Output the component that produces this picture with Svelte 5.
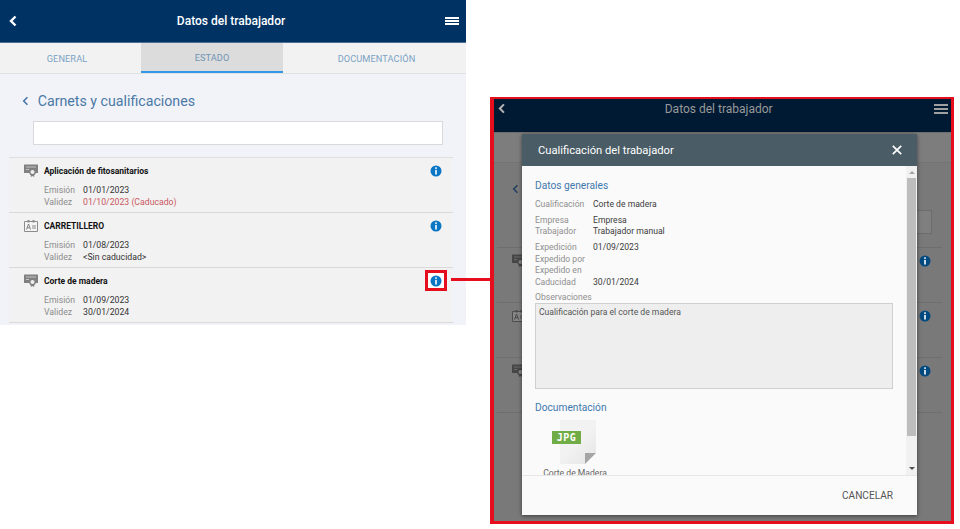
<script>
	const rows = [
		{ icon: "cert", name: "Aplicación de fitosanitarios", emision: "01/01/2023", validez: "01/10/2023 (Caducado)", expired: true },
		{ icon: "card", name: "CARRETILLERO", emision: "01/08/2023", validez: "<Sin caducidad>", expired: false },
		{ icon: "cert", name: "Corte de madera", emision: "01/09/2023", validez: "30/01/2024", expired: false, marked: true }
	];
</script>

{#snippet rowIcon(kind)}
	{#if kind === "cert"}
		<svg class="row-icon" viewBox="0 0 14 13" width="14" height="13">
			<rect x="0" y="0.500" width="14" height="8.500" rx=".5" fill="#808080" />
			<path d="M2 3h10" stroke="#c4c4c4" />
			<path d="M2 5.500h3" stroke="#c4c4c4" />
			<path d="M6.800 10v3l1.700-.9 1.700.9v-3z" fill="#808080" />
			<circle cx="8.500" cy="8" r="2.700" fill="#efefef" stroke="#808080" stroke-width="1.300" />
		</svg>
	{:else}
		<svg class="row-icon" viewBox="0 0 14 13" width="14" height="13">
			<path d="M.5 2.500h13v10H.5z" fill="#f4f4f4" stroke="#8c8c8c" />
			<path d="M3.500 1h2v2.500h-2zM8.500 1h2v2.500h-2z" fill="#8c8c8c" />
			<path d="M2.500 10.500l2-5.500 2 5.500M3.300 8.800h2.400" fill="none" stroke="#777" stroke-width=".9" />
			<path d="M8 7h4M8 9h4" stroke="#8c8c8c" />
		</svg>
	{/if}
{/snippet}

{#snippet infoIcon()}
	<svg class="info" viewBox="0 0 12 12" width="12" height="12">
		<circle cx="6" cy="6" r="5.500" fill="currentColor" />
		<rect x="5.200" y="2.300" width="1.600" height="1.600" fill="#fff" />
		<rect x="5.200" y="4.900" width="1.600" height="4.600" fill="#fff" />
	</svg>
{/snippet}

{#snippet burger()}
	<div class="burger"><span></span><span></span><span></span></div>
{/snippet}

{#snippet chevron(size, color, weight)}
	<svg viewBox="0 0 8 12" width={size * 0.67} height={size} class="chevron">
		<path d="M6.500 1.500L2 6l4.500 4.500" fill="none" stroke={color} stroke-width={weight} />
	</svg>
{/snippet}

<div class="page">
	<section class="app">
		<header class="bar">
			{@render chevron(12, "#fff", 2.400)}
			<h1>Datos del trabajador</h1>
			{@render burger()}
		</header>
		<nav class="tabs">
			<div class="tab t1">GENERAL</div>
			<div class="tab t2 active">ESTADO</div>
			<div class="tab t3">DOCUMENTACIÓN</div>
		</nav>
		<div class="heading">
			{@render chevron(10, "#3f72a3", 1.800)}
			<h2>Carnets y cualificaciones</h2>
		</div>
		<div class="search"></div>
		<div class="list">
			{#each rows as row}
				<article class="row">
					<div class="row-head">
						{@render rowIcon(row.icon)}
						<strong>{row.name}</strong>
						<span class="info-wrap" class:marked={row.marked}>
							{@render infoIcon()}
							{#if row.marked}<i class="connector"></i>{/if}
						</span>
					</div>
					<dl>
						<dt>Emisión</dt><dd>{row.emision}</dd>
						<dt>Validez</dt><dd class:expired={row.expired}>{row.validez}</dd>
					</dl>
				</article>
			{/each}
		</div>
	</section>

	<section class="frame">
		<div class="dimmed">
			<header class="dim-bar">
				{@render chevron(11, "#b5b5b5", 2.200)}
				<h1>Datos del trabajador</h1>
				{@render burger()}
			</header>
			<div class="dim-tabs"></div>
			<div class="dim-heading">{@render chevron(10, "#1f3f5f", 1.800)}</div>
			<div class="dim-search"></div>
			<div class="dim-list">
				{#each rows as row}
					<div class="dim-row">
						{@render rowIcon(row.icon)}
						{@render infoIcon()}
					</div>
				{/each}
			</div>
		</div>

		<div class="modal">
			<div class="modal-head">
				<h3>Cualificación del trabajador</h3>
				<svg viewBox="0 0 10 10" width="10" height="10">
					<path d="M.8.8l8.400 8.400M9.200.8L.8 9.200" stroke="#fff" stroke-width="1.700" />
				</svg>
			</div>
			<div class="modal-body">
				<div class="modal-content">
					<h4>Datos generales</h4>
					<div class="fields first">
						<span>Cualificación</span><b>Corte de madera</b>
					</div>
					<div class="fields">
						<span>Empresa</span><b>Empresa</b>
						<span>Trabajador</span><b>Trabajador manual</b>
					</div>
					<div class="fields">
						<span>Expedición</span><b>01/09/2023</b>
						<span>Expedido por</span><b></b>
						<span>Expedido en</span><b></b>
						<span>Caducidad</span><b>30/01/2024</b>
					</div>
					<div class="obs-label">Observaciones</div>
					<div class="obs">Cualificación para el corte de madera</div>
					<h4 class="doc-title">Documentación</h4>
					<div class="file">
						<div class="sheet">
							<span class="fold"></span>
							<span class="jpg">JPG</span>
						</div>
						<div class="file-name">Corte de Madera</div>
					</div>
				</div>
				<div class="scrollbar">
					<i class="arrow up"></i>
					<div class="thumb"></div>
					<i class="arrow down"></i>
				</div>
			</div>
			<footer class="modal-foot">CANCELAR</footer>
		</div>
	</section>
</div>

<style>
	:global(body) {
		margin: 0;
		background: #fff;
	}

	h1, h2, h3, h4, dl, dd {
		margin: 0;
		font-weight: 400;
	}

	.page {
		display: flex;
		align-items: flex-start;
		width: 960px;
		height: 529px;
		overflow: hidden;
		font-family: Roboto, "Liberation Sans", sans-serif;
	}

	.chevron {
		display: block;
		flex: none;
	}

	/* left: the app screen */
	.app {
		flex: none;
		width: 466px;
		height: 325px;
		background: #f2f3f8;
	}

	.bar {
		display: flex;
		align-items: center;
		justify-content: space-between;
		height: 43px;
		padding: 0 7px 0 9px;
		box-sizing: border-box;
		background: #003364;
		border-bottom: 1px solid #4d6f93;
		color: #fff;
	}

	.bar h1 {
		font-size: 12px;
		font-weight: 500;
	}

	.burger {
		display: flex;
		flex-direction: column;
		gap: 1px;
		width: 14px;
	}

	.burger span {
		height: 2px;
		background: currentColor;
	}

	.tabs {
		display: flex;
		height: 30px;
		padding-left: 1px;
		background: #f2f2f2;
		border-bottom: 1px solid #e2e2e2;
	}

	.tab {
		display: flex;
		align-items: center;
		justify-content: center;
		font-size: 9.200px;
		letter-spacing: .1px;
		color: #7ba2c4;
		box-sizing: border-box;
	}

	.t1 { width: 140px; padding-right: 8px; }
	.t2 { width: 142px; }
	.t3 { flex: 1; padding-left: 4px; }

	.tab.active {
		background: #dcdcdc;
		border-bottom: 2px solid #3197e6;
		color: #6f94b5;
	}

	.heading {
		display: flex;
		align-items: center;
		gap: 9px;
		padding: 18px 0 0 22px;
	}

	.heading h2 {
		font-size: 14.200px;
		line-height: 18px;
		color: #4a79a6;
	}

	.search {
		height: 24px;
		margin: 11px 23px 0 33px;
		box-sizing: border-box;
		background: #fff;
		border: 1px solid #d9d9d9;
	}

	.list {
		margin: 12px 13px 0 9px;
		border-top: 1px solid #dfdfdf;
	}

	.row {
		height: 55px;
		box-sizing: border-box;
		padding: 6px 11px 0 15px;
		background: #f2f2f2;
		border-bottom: 1px solid #d9d9d9;
	}

	.row-head {
		display: flex;
		align-items: center;
		height: 13px;
	}

	.row-icon {
		flex: none;
		display: block;
	}

	.row-head strong {
		flex: 1;
		margin-left: 6px;
		font-size: 8.500px;
		font-weight: 700;
		color: #111;
	}

	.info-wrap {
		position: relative;
		display: block;
		color: #0a76c4;
		height: 12px;
	}

	.info {
		display: block;
	}

	.info-wrap.marked::before {
		content: "";
		position: absolute;
		left: -5px;
		top: -5px;
		width: 16px;
		height: 15px;
		border: 3px solid #e60d1c;
		background: #fff;
	}

	.info-wrap.marked .info {
		position: relative;
	}

	.connector {
		position: absolute;
		left: 21px;
		top: 3px;
		width: 40px;
		height: 3px;
		background: #e60d1c;
	}

	dl {
		display: grid;
		grid-template-columns: 39px 1fr;
		margin: 8px 0 0 20px;
		font-size: 8.700px;
		line-height: 11.500px;
	}

	dt {
		color: #8c8c8c;
	}

	dd {
		color: #333;
	}

	dd.expired {
		color: #c9575f;
	}

	/* right: same screen dimmed behind the dialog */
	.frame {
		position: relative;
		flex: none;
		width: 464px;
		height: 427px;
		margin: 97px 0 0 24px;
		box-sizing: border-box;
		border: solid #e60d1c;
		border-width: 2px 3px 3px 4px;
	}

	.dimmed {
		height: 100%;
		background: #797979;
	}

	.dim-bar {
		display: flex;
		align-items: center;
		justify-content: space-between;
		height: 33px;
		padding: 0 3px 14px 4px;
		box-sizing: border-box;
		background: #001a33;
		color: #a0a0a0;
	}

	.dim-bar .burger {
		gap: 2px;
	}

	.dim-bar h1 {
		font-size: 12px;
		font-weight: 400;
		color: #999;
		margin-left: -2px;
	}

	.dim-tabs {
		height: 31px;
		background: #7d7d7d;
		border-bottom: 1px solid #747474;
		border-top: 1px solid #6e6e6e;
		box-sizing: border-box;
	}

	.dim-heading {
		padding: 21px 0 0 18px;
	}

	.dim-search {
		height: 24px;
		margin: 16px 19px 0 40px;
		box-sizing: border-box;
		border: 1px solid #6c6c6c;
		background: #7f7f7f;
	}

	.dim-list {
		margin: 13px 9px 0 3px;
		border-top: 1px solid #6e6e6e;
	}

	.dim-row {
		display: flex;
		justify-content: space-between;
		align-items: center;
		height: 55px;
		box-sizing: border-box;
		padding: 0 11px 29px 15px;
		border-bottom: 1px solid #6e6e6e;
		color: #004a80;
	}

	.dim-row .row-icon {
		filter: brightness(.55);
	}

	.modal {
		position: absolute;
		left: 28px;
		top: 35px;
		width: 395px;
		height: 381px;
		display: flex;
		flex-direction: column;
		background: #fafafa;
		box-shadow: 0 1px 4px rgba(0, 0, 0, .5);
	}

	.modal-head {
		display: flex;
		align-items: center;
		justify-content: space-between;
		height: 32px;
		flex: none;
		padding: 0 15px 0 16px;
		background: #4a5c66;
		color: #fff;
	}

	.modal-head h3 {
		font-size: 11.200px;
		font-weight: 400;
	}

	.modal-body {
		flex: 1;
		display: flex;
		min-height: 0;
	}

	.modal-content {
		flex: 1;
		overflow: hidden;
		padding: 14px 13px 0 13px;
		font-size: 8.600px;
		line-height: 11.400px;
	}

	h4 {
		font-size: 10.200px;
		line-height: 12px;
		color: #3f79ad;
	}

	.fields {
		display: grid;
		grid-template-columns: 58px 1fr;
		margin-top: 4.600px;
		color: #8f8f8f;
	}

	.fields.first {
		margin-top: 7px;
	}

	.fields b {
		font-weight: 400;
		color: #3c3c3c;
	}

	.obs-label {
		margin-top: 4px;
		color: #8f8f8f;
	}

	.obs {
		height: 86px;
		padding: 3px;
		box-sizing: border-box;
		width: 358px;
		background: #eeeeee;
		border: 1px solid #cfcfcf;
		color: #555;
	}

	.doc-title {
		margin-top: 13px;
	}

	.file {
		width: 80px;
		margin-top: 6px;
		text-align: center;
	}

	.sheet {
		position: relative;
		width: 36px;
		height: 44px;
		margin-left: 25px;
		background: linear-gradient(135deg, #f2f2f2 50%, #e4e4e4);
	}

	.fold {
		position: absolute;
		right: 0;
		bottom: 0;
		border-style: solid;
		border-width: 0 0 11px 11px;
		border-color: transparent transparent #fafafa #a5a5a5;
	}

	.jpg {
		position: absolute;
		left: -8px;
		top: 11px;
		width: 29px;
		height: 13px;
		background: #70ad47;
		color: #fff;
		font-size: 10px;
		font-weight: 700;
		line-height: 13px;
		letter-spacing: .4px;
		text-align: center;
		font-family: "DejaVu Sans Mono", monospace;
	}

	.file-name {
		margin-top: 4px;
		white-space: nowrap;
		color: #666;
	}

	.scrollbar {
		flex: none;
		display: flex;
		flex-direction: column;
		align-items: center;
		width: 11px;
		background: #f1f1f1;
	}

	.thumb {
		flex: none;
		height: 258px;
		width: 9px;
		margin-top: 4px;
		background: #bdbdbd;
	}

	.arrow {
		display: block;
		width: 0;
		height: 0;
		border-left: 3px solid transparent;
		border-right: 3px solid transparent;
	}

	.arrow.up {
		margin-top: 5px;
		border-bottom: 3px solid #a5a5a5;
	}

	.arrow.down {
		margin-top: auto;
		margin-bottom: 5px;
		border-top: 3px solid #505050;
	}

	.modal-foot {
		flex: none;
		height: 40px;
		box-sizing: border-box;
		display: flex;
		align-items: center;
		justify-content: flex-end;
		padding-right: 24px;
		border-top: 1px solid #e6e6e6;
		font-size: 10.100px;
		color: #555;
	}
</style>
